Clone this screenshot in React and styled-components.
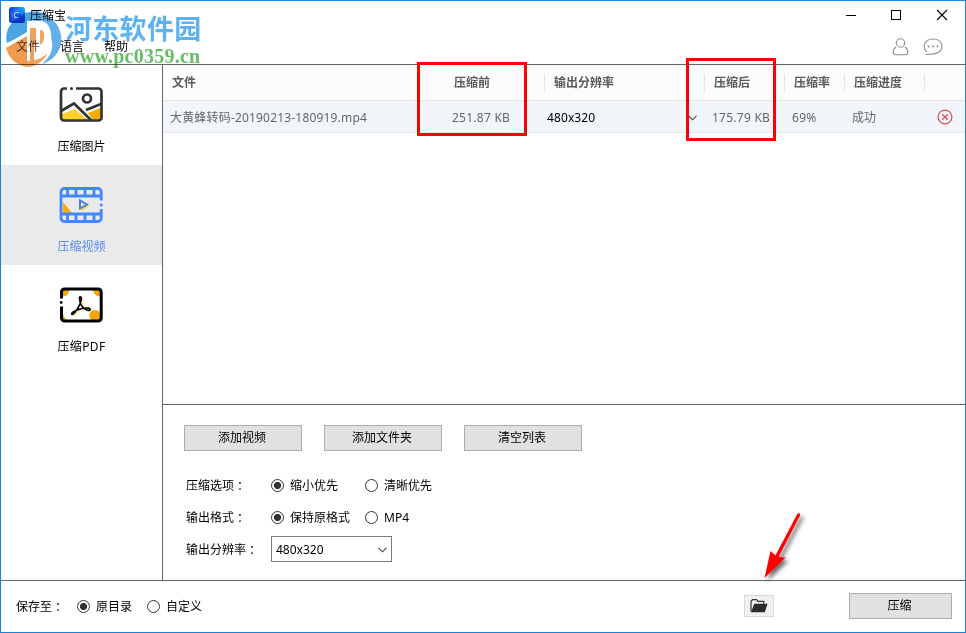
import { useState } from 'react';
import styled, { createGlobalStyle } from 'styled-components';

const GlobalStyle = createGlobalStyle`
  *, *::before, *::after {
    box-sizing: border-box;
  }

  body {
    margin: 0;
    background: #fff;
  }

  body, button {
    font-family: 'Noto Sans', 'Noto Sans CJK SC', sans-serif;
    font-size: 12px;
    color: #000;
  }
`;

const Window = styled.div`
  position: relative;
  display: flex;
  flex-direction: column;
  width: 966px;
  height: 633px;
  border: 1px solid #1883d7;
  background: #fff;
  line-height: 16px;
  white-space: nowrap;
  overflow: hidden;
`;

const Header = styled.header`
  display: flex;
  flex-direction: column;
  height: 64px;
  border-bottom: 1px solid #646464;
`;

const TitleBar = styled.div`
  display: flex;
  align-items: center;
  height: 28px;
  padding: 0 17px 0 8px;
`;

const Title = styled.span`
  flex: 1;
  margin-left: 5px;
  padding-top: 2px;
`;

const WindowControls = styled.div`
  display: flex;
  gap: 34px;
`;

const MenuBar = styled.nav`
  display: flex;
  align-items: center;
  height: 35px;
  padding: 0 22px 0 15px;
`;

const MenuItem = styled.span`
  margin-right: 20px;
  color: ${({ $muted }) => ($muted ? '#555' : '#000')};
`;

const HeaderIcons = styled.div`
  display: flex;
  gap: 14px;
  margin-left: auto;
`;

const Body = styled.div`
  display: flex;
  height: 516px;
  border-bottom: 1px solid #646464;
`;

const Sidebar = styled.aside`
  width: 162px;
  border-right: 1px solid #646464;
`;

const NavItem = styled.div`
  display: flex;
  flex-direction: column;
  align-items: center;
  height: 100px;
  padding-top: 18px;
  color: ${({ $active }) => ($active ? '#5b8cf5' : '#000')};
  background: ${({ $active }) => ($active ? '#eaeaea' : 'transparent')};

  svg {
    margin-right: 1px;
  }

  span {
    margin-top: 12px;
    letter-spacing: ${({ $spacing = 0 }) => $spacing}px;
  }
`;

const Main = styled.main`
  flex: 1;
`;

const FileList = styled.section`
  height: 340px;
  border-bottom: 1px solid #646464;
`;

const TableRow = styled.div`
  display: grid;
  grid-template-columns: 281px 100px 160px 80px 60px 80px 1fr;
  align-items: center;
`;

const TableHead = styled(TableRow)`
  height: 36px;
  border-bottom: 1px solid #e2e7ea;
  background: #fcfcfc;
  color: #5a5a5a;
  font-weight: 700;
`;

const HeadCell = styled.div`
  height: 17px;
  padding-left: 9px;
  border-left: ${({ $divided }) => ($divided ? '1px solid #e0e8ec' : '1px solid transparent')};
  line-height: 18px;

  &:first-child {
    padding-left: 8px;
  }
`;

const FileRow = styled(TableRow)`
  height: 32px;
  border-bottom: 1px solid #e2e7ea;
  background: #f2f6fa;
  color: #666;
`;

const Cell = styled.div`
  display: flex;
  align-items: center;
  padding-top: ${({ $top = 2 }) => $top}px;
  padding-left: ${({ $indent = 8 }) => $indent}px;
  color: ${({ $dark }) => ($dark ? '#000' : 'inherit')};
  letter-spacing: ${({ $spacing = 0 }) => $spacing}px;
`;

const CellChevron = styled.span`
  display: flex;
  margin-left: auto;
  margin-right: 7px;
`;

const Settings = styled.section`
  padding: 20px 21px 0;
`;

const ButtonRow = styled.div`
  display: flex;
  gap: 22px;
  margin-bottom: 18px;
`;

const Button = styled.button`
  width: ${({ $width = 118 }) => $width}px;
  height: 26px;
  padding: 0 2px 0 0;
  border: 1px solid #adadad;
  background: #e1e1e1;
  line-height: 16px;
`;

const OptionRow = styled.div`
  display: flex;
  align-items: center;
  height: 32px;
  padding-left: 2px;
`;

const OptionLabel = styled.span`
  width: ${({ $width = 85 }) => $width}px;
  padding-top: 1px;
`;

const Colon = styled.span`
  margin-left: 3px;
`;

const RadioLabel = styled.label`
  display: flex;
  align-items: center;
  width: ${({ $width = 94 }) => $width}px;

  span {
    padding-top: 1px;
  }
`;

const RadioInput = styled.input`
  appearance: none;
  width: 13px;
  height: 13px;
  margin: 0 6px 0 0;
  border: 1px solid #333;
  border-radius: 50%;
  background: #fff;

  &:checked {
    background: radial-gradient(circle, #333 3.2px, #fff 3.9px);
  }
`;

const SelectBox = styled.div`
  display: flex;
  align-items: center;
  justify-content: space-between;
  width: 121px;
  height: 26px;
  padding: 1px 4px 0;
  border: 1px solid #7a7a7a;
`;

const Footer = styled.footer`
  display: flex;
  align-items: center;
  height: 50px;
  padding: 0 13px 0 15px;
`;

const FolderButton = styled.button`
  display: flex;
  align-items: center;
  justify-content: center;
  width: 30px;
  height: 22px;
  margin: 0 75px 0 auto;
  padding: 0 1px 1px 0;
  border: 1px solid #d9d9d9;
  background: #f0f0f0;
`;

const Highlight = styled.div`
  position: absolute;
  left: ${({ $x }) => $x}px;
  top: ${({ $y }) => $y}px;
  width: ${({ $w }) => $w}px;
  height: ${({ $h }) => $h}px;
  border: 3px solid #fe0000;
`;

const Arrow = styled.svg`
  position: absolute;
  left: 755px;
  top: 505px;
`;

const Watermark = styled.div`
  position: absolute;
  left: 3px;
  top: 8px;
  display: flex;
  mix-blend-mode: multiply;
`;

const WatermarkText = styled.div`
  display: flex;
  flex-direction: column;
  margin-left: 1px;
`;

const SiteName = styled.span`
  height: 35px;
  color: #5fb2f2;
  font-family: 'Noto Sans CJK SC', sans-serif;
  font-size: 27px;
  font-weight: 700;
  line-height: 38px;
  letter-spacing: 0.3px;
`;

const SiteUrl = styled.span`
  color: #69bd64;
  font-family: 'Liberation Serif', serif;
  font-size: 20px;
  font-weight: 700;
  line-height: 24px;
  letter-spacing: 0.25px;
`;

const AppLogo = () => (
  <svg width="16" height="16" viewBox="0 0 16 16" fill="none">
    <defs>
      <linearGradient id="app-logo" x1="0" y1="1" x2="1" y2="0">
        <stop offset="0" stopColor="#1740c9" />
        <stop offset="0.55" stopColor="#1450e8" />
        <stop offset="1" stopColor="#08c8f8" />
      </linearGradient>
    </defs>
    <rect width="16" height="16" rx="2.5" fill="url(#app-logo)" />
    <circle cx="8" cy="8" r="5" stroke="#4b8cff" />
    <path d="M10 6.2A2.7 2.7 0 1 0 10 9.8" stroke="#a8d4ff" strokeWidth="1.2" />
  </svg>
);

const UserIcon = () => (
  <svg width="17" height="18" viewBox="0 0 17 18" fill="none" stroke="#8c8c8c" strokeWidth="1.1" strokeLinecap="round">
    <circle cx="8.5" cy="5" r="4.2" />
    <path d="M3.8 9.2C2.1 10.6 1 12.800 1.200 14.900c.2 1.400 1 1.800 2.300 1.800h10c1.300 0 2.100-.4 2.300-1.800.2-2.100-.9-4.300-2.600-5.700" />
  </svg>
);

const ChatIcon = () => (
  <svg width="20" height="18" viewBox="0 0 20 18" fill="none" stroke="#8c8c8c" strokeWidth="1.1" strokeLinecap="round">
    <path d="M3.2 13.3C-.1 9.7.5 4.6 4.5 2.4c3-1.900 8.100-1.900 11.200 0 4.300 2.600 4.300 9-.2 11.900-2.700 2-6.500 2.100-12.500 2.200" />
    <g fill="#8c8c8c" stroke="none">
      <circle cx="5.500" cy="8.500" r="1" />
      <circle cx="10" cy="8.500" r="1" />
      <circle cx="14.500" cy="8.500" r="1" />
    </g>
  </svg>
);

const ImageIcon = () => (
  <svg width="44" height="44" viewBox="0 0 44 44" fill="none">
    <path d="M3 31l13-5 13 11H3z" fill="#ffd12b" />
    <path d="M29 30l12-5v12h-7z" fill="#f9ad00" />
    <g stroke="#333" strokeWidth="2.700">
      <path d="M8 5.500H5a3 3 0 0 0-3 3v26a3 3 0 0 0 3 3h34.500a3 3 0 0 0 3-3v-26a3 3 0 0 0-3-3H17" />
      <path d="M2 28l13-7.500L32 37" />
      <path d="M27 27l15-6" />
      <circle cx="28" cy="15.500" r="4" />
    </g>
    <circle cx="12.500" cy="5.500" r="1.500" fill="#333" />
  </svg>
);

const VideoIcon = () => (
  <svg width="44" height="44" viewBox="0 0 44 44" fill="none">
    <path d="M4 19l9 11H4z" fill="#f9ad00" />
    <path d="M22 26.500l7-4.500" stroke="#ffd12b" strokeWidth="3" />
    <g stroke="#4387ff" strokeWidth="2.800">
      <path d="M42.200 17.500V9A3.500 3.500 0 0 0 38.700 5.500H5.500A3.500 3.500 0 0 0 2 9v26a3.500 3.500 0 0 0 3.500 3.500h33.200a3.500 3.500 0 0 0 3.500-3.500v-9" />
      <path d="M2 13h40M2 31h40M8.500 6v7M17 6v7M26 6v7M35 6v7M8.500 32v6M17 32v6M26 32v6M35 32v6" />
    </g>
    <path d="M21 17.500v8l7-4z" stroke="#4a83df" strokeWidth="2" />
    <circle cx="42.200" cy="22" r="1.500" fill="#4387ff" />
  </svg>
);

const PdfIcon = () => (
  <svg width="44" height="44" viewBox="0 0 44 44" fill="none">
    <path d="M4 6.500h6a6 6 0 0 1-6 7zM34 6.500h7v7a7 7 0 0 1-7-7zM4 32l4 6H4zM41 30.500a5.500 5.500 0 1 0-5 7.500h5z" fill="#f3a70b" />
    <path d="M23 15l1 9 8 3M22 26l-8 6" stroke="#fff0c8" strokeWidth="4" />
    <path d="M2.500 15.500V9a3 3 0 0 1 3-3h33.700a3 3 0 0 1 3 3v26a3 3 0 0 1-3 3H5.500a3 3 0 0 1-3-3V23.500" stroke="#000" strokeWidth="3" />
    <circle cx="2.200" cy="19.500" r="1.400" fill="#000" />
    <path
      d="M20.500 15.500c-.9-2 2.300-2.400 1.800.4-.4 3.300-2.300 7.900-5.200 12-1.400 2-3.200 4.100-4.200 3.400-1.200-1 2.200-3.200 5.900-4.500 3.600-1.400 7.500-2.200 10.400-1.700 2.200.4 2.500 2 1 2.300-2.600.5-6.500-2.500-8.200-5.700-1-2-1.400-5-1.500-6.200z"
      stroke="#000"
      strokeWidth="1.600"
    />
  </svg>
);

const ChevronDown = () => (
  <svg width="9" height="6" viewBox="0 0 9 6" fill="none" stroke="#444" strokeWidth="1.1">
    <path d="M.5.8l4 4 4-4" />
  </svg>
);

const DeleteIcon = () => (
  <svg width="16" height="16" viewBox="0 0 16 16" fill="none" stroke="#d9535a" strokeWidth="1.300">
    <circle cx="8" cy="8" r="6.900" />
    <path d="M5.200 5.200l5.600 5.600M10.800 5.200l-5.600 5.600" />
  </svg>
);

const FolderIcon = () => (
  <svg width="18" height="14" viewBox="0 0 18 14">
    <path d="M1 12.500V2.500l1.500-1.800h4L8 2.300h5.700v2.500" fill="none" stroke="#333" strokeWidth="1.200" />
    <path d="M4.200 4.700H17.500L14.800 13.200H1z" fill="#2b2b2b" />
  </svg>
);

const WatermarkLogo = () => (
  <svg width="60" height="60" viewBox="0 0 60 60">
    <path d="M8 14C18 1 35-1 46 8c-7-2-15 0-21 6l-2 2v8L3 34C1 27 3 19 8 14z" fill="#4ba4e3" />
    <path d="M26 10C35 0 54 8 57 26c2 14-6 25-19 29 10-8 13-19 8-29-4-9-11-12-20-16z" fill="#62b1e8" />
    <path d="M2 39l21-12v30C13 57 5 50 2 39z" fill="#f29b50" />
    <path d="M25 17h7v38l-7 3z" fill="#f0a060" />
    <path d="M36 21c10 1 10 16 0 18z" fill="#f3a45f" />
    <path d="M23 12h13c15 0 15 31 0 31h-3v14h-3V36h5c7 0 7-17 0-17h-9v38h-3V25L3 38v-3l20-12z" fill="#fff" />
    <path d="M11 48c9 6 24 5 33-4-5 10-14 14-22 14-5-1-8-4-11-10z" fill="#f29b50" opacity=".9" />
  </svg>
);

const navItems = [
  { id: 'image', label: '压缩图片', Icon: ImageIcon },
  { id: 'video', label: '压缩视频', Icon: VideoIcon },
  { id: 'pdf', label: '压缩PDF', Icon: PdfIcon, spacing: 0.4 },
];

const Radio = ({ name, value, current, onChange, width }) => (
  <RadioLabel $width={width}>
    <RadioInput type="radio" name={name} checked={current === value} onChange={() => onChange(value)} />
    <span>{value}</span>
  </RadioLabel>
);

const App = () => {
  const [active, setActive] = useState('video');
  const [priority, setPriority] = useState('缩小优先');
  const [format, setFormat] = useState('保持原格式');
  const [target, setTarget] = useState('原目录');

  return (
    <>
      <GlobalStyle />
      <Window>
        <Header>
          <TitleBar>
            <AppLogo />
            <Title>压缩宝</Title>
            <WindowControls>
              <svg width="12" height="12" viewBox="0 0 12 12" stroke="#000">
                <path d="M2 6.5h10" />
              </svg>
              <svg width="12" height="12" viewBox="0 0 12 12" fill="none" stroke="#000">
                <rect x="1.5" y="1.5" width="9" height="9" />
              </svg>
              <svg width="12" height="12" viewBox="0 0 12 12" stroke="#000" strokeWidth="1.1">
                <path d="M1 1l10 10M11 1L1 11" />
              </svg>
            </WindowControls>
          </TitleBar>
          <MenuBar>
            <MenuItem $muted>文件</MenuItem>
            <MenuItem>语言</MenuItem>
            <MenuItem>帮助</MenuItem>
            <HeaderIcons>
              <UserIcon />
              <ChatIcon />
            </HeaderIcons>
          </MenuBar>
        </Header>

        <Body>
          <Sidebar>
            {navItems.map(({ id, label, Icon, spacing }) => (
              <NavItem key={id} $active={id === active} $spacing={spacing} onClick={() => setActive(id)}>
                <Icon />
                <span>{label}</span>
              </NavItem>
            ))}
          </Sidebar>
          <Main>
            <FileList>
              <TableHead>
                <HeadCell>文件</HeadCell>
                <HeadCell>压缩前</HeadCell>
                <HeadCell $divided>输出分辨率</HeadCell>
                <HeadCell $divided>压缩后</HeadCell>
                <HeadCell $divided>压缩率</HeadCell>
                <HeadCell $divided>压缩进度</HeadCell>
                <HeadCell $divided />
              </TableHead>
              <FileRow>
                <Cell $indent={7} $spacing={0.18}>大黄蜂转码-20190213-180919.mp4</Cell>
                <Cell $spacing={0.25}>251.87 KB</Cell>
                <Cell $indent={3} $spacing={0.1} $dark>
                  480x320
                  <CellChevron><ChevronDown /></CellChevron>
                </Cell>
                <Cell $spacing={0.25}>175.79 KB</Cell>
                <Cell $spacing={0.3}>69%</Cell>
                <Cell>成功</Cell>
                <Cell $top={0} $indent={12.5}><DeleteIcon /></Cell>
              </FileRow>
            </FileList>

            <Settings>
              <ButtonRow>
                <Button>添加视频</Button>
                <Button>添加文件夹</Button>
                <Button>清空列表</Button>
              </ButtonRow>
              <OptionRow>
                <OptionLabel>压缩选项<Colon>：</Colon></OptionLabel>
                <Radio name="priority" value="缩小优先" current={priority} onChange={setPriority} />
                <Radio name="priority" value="清晰优先" current={priority} onChange={setPriority} />
              </OptionRow>
              <OptionRow>
                <OptionLabel>输出格式<Colon>：</Colon></OptionLabel>
                <Radio name="format" value="保持原格式" current={format} onChange={setFormat} />
                <Radio name="format" value="MP4" current={format} onChange={setFormat} />
              </OptionRow>
              <OptionRow>
                <OptionLabel>输出分辨率<Colon>：</Colon></OptionLabel>
                <SelectBox>
                  480x320
                  <ChevronDown />
                </SelectBox>
              </OptionRow>
            </Settings>
          </Main>
        </Body>

        <Footer>
          <OptionLabel $width={61}>保存至<Colon>：</Colon></OptionLabel>
          <Radio name="target" value="原目录" current={target} onChange={setTarget} width={70} />
          <Radio name="target" value="自定义" current={target} onChange={setTarget} width={70} />
          <FolderButton aria-label="打开目录">
            <FolderIcon />
          </FolderButton>
          <Button $width={103}>压缩</Button>
        </Footer>

        <Watermark>
          <WatermarkLogo />
          <WatermarkText>
            <SiteName>河东软件园</SiteName>
            <SiteUrl>www.pc0359.cn</SiteUrl>
          </WatermarkText>
        </Watermark>

        <Highlight $x={416} $y={61} $w={110} $h={74} />
        <Highlight $x={685} $y={57} $w={90} $h={83} />

        <Arrow width="60" height="80" viewBox="0 0 60 80">
          <defs>
            <filter id="arrow-shadow" x="-30%" y="-30%" width="180%" height="160%">
              <feDropShadow dx="3" dy="3" stdDeviation="2" floodColor="#000" floodOpacity="0.6" />
            </filter>
          </defs>
          <path
            d="M41.500 7.500h2.500v2L22.500 51l7 .5L8.500 72l6-27 5 4.500z"
            fill="#fe0000"
            filter="url(#arrow-shadow)"
          />
        </Arrow>
      </Window>
    </>
  );
};

export default App;
